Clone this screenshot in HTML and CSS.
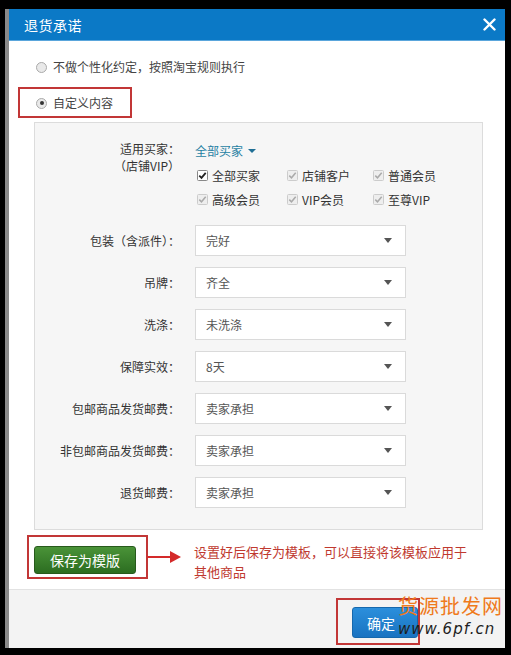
FILE: index.html
```html
<!DOCTYPE html>
<html lang="zh-CN">
<head>
<meta charset="utf-8">
<title>退货承诺</title>
<link rel="stylesheet" href="styles.css">
</head>
<body>
<div class="frame">
  <div class="strip"></div>
  <div class="dialog">
    <div class="titlebar">
      <span class="title">退货承诺</span>
      <svg class="close" width="13" height="13" viewBox="0 0 13 13"><path d="M1.5 1.5 L11.5 11.5 M11.5 1.5 L1.5 11.5" stroke="#fff" stroke-width="2.4" stroke-linecap="round"/></svg>
    </div>
    <div class="content">
      <div class="radio-row"><span class="radio"></span><span>不做个性化约定，按照淘宝规则执行</span></div>
      <div class="mark mark-radio">
        <div class="radio-row"><span class="radio on"></span><span>自定义内容</span></div>
      </div>
      <div class="panel">
        <div class="form">
          <div class="label buyer-label">适用买家：<br>（店铺VIP）</div>
          <div class="buyer">
            <div class="buyer-link">全部买家 <span class="caret"></span></div>
            <div class="checks">
              <span class="chk"><svg class="cb" width="11" height="11" viewBox="0 0 11 11"><rect x="0.5" y="0.5" width="10" height="10" rx="1" fill="#fff" stroke="#888"/><path d="M2.3 5.6 L4.5 7.8 L8.7 2.8" fill="none" stroke="#222" stroke-width="1.8"/></svg>全部买家</span>
              <span class="chk"><svg class="cb" width="11" height="11" viewBox="0 0 11 11"><rect x="0.5" y="0.5" width="10" height="10" rx="1" fill="#eee" stroke="#ccc"/><path d="M2.3 5.6 L4.5 7.8 L8.7 2.8" fill="none" stroke="#aaa" stroke-width="1.5"/></svg>店铺客户</span>
              <span class="chk"><svg class="cb" width="11" height="11" viewBox="0 0 11 11"><rect x="0.5" y="0.5" width="10" height="10" rx="1" fill="#eee" stroke="#ccc"/><path d="M2.3 5.6 L4.5 7.8 L8.7 2.8" fill="none" stroke="#aaa" stroke-width="1.5"/></svg>普通会员</span>
              <span class="chk"><svg class="cb" width="11" height="11" viewBox="0 0 11 11"><rect x="0.5" y="0.5" width="10" height="10" rx="1" fill="#eee" stroke="#ccc"/><path d="M2.3 5.6 L4.5 7.8 L8.7 2.8" fill="none" stroke="#aaa" stroke-width="1.5"/></svg>高级会员</span>
              <span class="chk"><svg class="cb" width="11" height="11" viewBox="0 0 11 11"><rect x="0.5" y="0.5" width="10" height="10" rx="1" fill="#eee" stroke="#ccc"/><path d="M2.3 5.6 L4.5 7.8 L8.7 2.8" fill="none" stroke="#aaa" stroke-width="1.5"/></svg>VIP会员</span>
              <span class="chk"><svg class="cb" width="11" height="11" viewBox="0 0 11 11"><rect x="0.5" y="0.5" width="10" height="10" rx="1" fill="#eee" stroke="#ccc"/><path d="M2.3 5.6 L4.5 7.8 L8.7 2.8" fill="none" stroke="#aaa" stroke-width="1.5"/></svg>至尊VIP</span>
            </div>
          </div>

          <div class="label">包装（含派件）：</div>
          <div class="select"><span>完好</span><span class="arrow"></span></div>

          <div class="label">吊牌：</div>
          <div class="select"><span>齐全</span><span class="arrow"></span></div>

          <div class="label">洗涤：</div>
          <div class="select"><span>未洗涤</span><span class="arrow"></span></div>

          <div class="label">保障实效：</div>
          <div class="select"><span>8天</span><span class="arrow"></span></div>

          <div class="label">包邮商品发货邮费：</div>
          <div class="select"><span>卖家承担</span><span class="arrow"></span></div>

          <div class="label">非包邮商品发货邮费：</div>
          <div class="select"><span>卖家承担</span><span class="arrow"></span></div>

          <div class="label">退货邮费：</div>
          <div class="select"><span>卖家承担</span><span class="arrow"></span></div>
        </div>
      </div>
      <div class="save-row">
        <div class="mark mark-save"><button class="btn-green">保存为模版</button></div>
        <svg class="pointer" width="36" height="14" viewBox="0 0 36 14"><path d="M0 7 H24" stroke="#d42a2a" stroke-width="2"/><path d="M23 1 L34 7 L23 13 Z" fill="#d42a2a"/></svg>
        <div class="note">设置好后保存为模板，可以直接将该模板应用于<br>其他商品</div>
      </div>
    </div>
    <div class="footer">
      <div class="mark mark-ok"><button class="btn-blue">确定</button></div>
      <div class="watermark">
        <div class="wm-big">货源批发网</div>
        <div class="wm-small">www.6pf.cn</div>
      </div>
    </div>
  </div>
</div>
</body>
</html>
```

FILE: styles.css
```css
html, body {
  margin: 0;
  padding: 0;
  background: #000;
  width: 511px;
  height: 655px;
  overflow: hidden;
  font-family: "Noto Sans CJK SC", "Noto Sans", sans-serif;
  font-size: 12px;
  color: #333;
}

.frame {
  display: flex;
  padding-top: 9px;
}

.strip {
  width: 4px;
  margin-left: 5px;
  height: 639px;
  background: #8a8a8a;
}

.dialog {
  width: 496px;
  height: 639px;
  background: #fff;
  position: relative;
  display: flex;
  flex-direction: column;
}

.titlebar {
  height: 32px;
  background: #0b79c6;
  border-bottom: 1px solid #5aa6dc;
  display: flex;
  align-items: center;
  justify-content: space-between;
  padding: 0 9px 0 15px;
  box-sizing: border-box;
}

.title {
  color: #fff;
  font-size: 14px;
  letter-spacing: 0.5px;
}

.close {
  display: block;
}

.content {
  padding-top: 17px;
  flex: 1;
}

.radio-row {
  display: flex;
  align-items: center;
  height: 18px;
  padding-left: 27px;
  color: #444;
  line-height: 18px;
}

.radio {
  width: 9px;
  height: 9px;
  border: 1px solid #aaa;
  border-radius: 50%;
  background: #e9e9e9;
  margin-right: 6px;
  position: relative;
}

.radio.on::after {
  content: "";
  position: absolute;
  left: 2.5px;
  top: 2.5px;
  width: 4px;
  height: 4px;
  border-radius: 50%;
  background: #333;
}

.mark {
  border: 2px solid #c23636;
  box-sizing: border-box;
}

.mark-radio {
  width: 114px;
  height: 31px;
  margin: 11px 0 0 9px;
  padding-top: 5px;
}

.mark-radio .radio-row {
  padding-left: 16px;
}

.panel {
  margin: 4px 0 0 25px;
  width: 449px;
  height: 408px;
  box-sizing: border-box;
  border: 1px solid #dcdcdc;
  background: #f6f6f6;
  padding: 16px 0 19px 0;
}

.form {
  display: grid;
  grid-template-columns: 145px 211px;
  column-gap: 15px;
  row-gap: 11px;
  align-items: center;
}

.label {
  text-align: right;
  color: #333;
}

.buyer-label {
  align-self: start;
  line-height: 17px;
  padding-top: 1px;
}

.buyer {
  padding-bottom: 3px;
}

.buyer-link {
  margin-top: 2px;
  line-height: 20px;
  color: #1f7fa3;
  display: flex;
  align-items: center;
}

.caret {
  display: inline-block;
  margin-left: 5px;
  width: 0;
  height: 0;
  border-left: 4px solid transparent;
  border-right: 4px solid transparent;
  border-top: 4px solid #1f6f95;
}

.checks {
  display: grid;
  grid-template-columns: 90px 86px auto;
  grid-auto-rows: 24px;
  padding-left: 2px;
  margin-top: 2px;
}

.chk {
  display: flex;
  align-items: center;
  color: #333;
  white-space: nowrap;
}

.cb {
  margin-right: 4px;
  flex: none;
}

.select {
  height: 31px;
  box-sizing: border-box;
  border: 1px solid #dadada;
  background: #fff;
  display: flex;
  align-items: center;
  justify-content: space-between;
  padding: 0 13px 0 10px;
  color: #555;
}

.arrow {
  width: 0;
  height: 0;
  border-left: 4.5px solid transparent;
  border-right: 4.5px solid transparent;
  border-top: 5px solid #555;
}

.save-row {
  display: flex;
  align-items: flex-start;
  margin: 5px 0 0 18px;
}

.mark-save {
  width: 121px;
  height: 44px;
  padding: 9px 0 0 5px;
}

.btn-green {
  width: 102px;
  height: 28px;
  border: 1px solid #275a1c;
  border-radius: 3px;
  background: linear-gradient(#4a9338, #2c6d21);
  color: #fff;
  font-family: "Noto Sans CJK SC", sans-serif;
  font-size: 14px;
  padding: 0;
}

.pointer {
  margin-top: 15px;
  margin-left: -1px;
}

.note {
  margin: 7px 0 0 11px;
  color: #c0392f;
  font-size: 13px;
  line-height: 20px;
}

.footer {
  height: 59px;
  box-sizing: border-box;
  border-top: 1px solid #e2e2e2;
  background: #f3f3f3;
  padding: 8px 0 0 327px;
  position: relative;
}

.mark-ok {
  width: 84px;
  height: 47px;
  padding: 7px 0 0 14px;
}

.btn-blue {
  width: 66px;
  height: 31px;
  border: 1px solid #1668ad;
  border-radius: 3px;
  background: linear-gradient(#2b8fdc, #1a73c1);
  color: #fff;
  font-family: "Noto Sans CJK SC", sans-serif;
  font-size: 14px;
  padding: 0 8px 0 0;
}

.watermark {
  position: absolute;
  left: 389px;
  top: 3px;
  color: #ef7a1c;
  font-family: "Noto Sans CJK SC", sans-serif;
}

.wm-big {
  font-size: 20px;
  line-height: 26px;
  letter-spacing: 1px;
}

.wm-small {
  font-size: 15px;
  line-height: 20px;
  color: #1e1e1e;
  letter-spacing: 1px;
  font-family: "DejaVu Sans", sans-serif;
  font-style: italic;
}
```
